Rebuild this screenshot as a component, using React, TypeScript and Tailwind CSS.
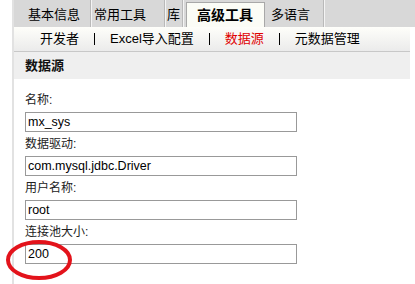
import React from "react";

const cjk = { fontFamily: '"Liberation Sans", "Noto Sans CJK SC", sans-serif' };

function Sep() {
  return (
    <div className="flex h-full">
      <div className="w-px bg-[#b9b9b9]" />
      <div className="w-px bg-[#f4f4f4]" />
    </div>
  );
}

function Field({ label, value }: { label: string; value: string }) {
  return (
    <div className="flex flex-col">
      <div className="h-[24px] flex items-center text-[12px] text-[#222]">{label}</div>
      <div className="h-[20px] w-[272px] border border-[#999] bg-white flex items-center pl-[2px] text-[12.5px] text-black leading-none">
        {value}
      </div>
    </div>
  );
}

export default function App() {
  return (
    <div className="relative w-[415px] h-[284px] bg-white flex overflow-hidden" style={cjk}>
      <div className="w-[12px] shrink-0" />
      <div className="w-[2px] shrink-0 bg-[#e2e2e2]" />
      <div className="flex-1 flex flex-col">
        {/* tab bar */}
        <div className="h-[27px] bg-[#d8d8d8] flex items-end text-[13px] text-black">
          <div className="w-[76px] h-[25px] pl-[14px] flex items-center">基本信息</div>
          <Sep />
          <div className="w-[72px] h-[25px] pl-[2px] flex items-center">常用工具</div>
          <Sep />
          <div className="w-[16px] h-[25px] pl-[1px] flex items-center">库</div>
          <Sep />
          <div className="w-[2px]" />
          <div className="w-[79px] h-[25px] pl-[10px] flex items-center bg-[#fbfcf6] border-t border-l border-r border-[#a8a8a8] font-bold text-[14px]">
            高级工具
          </div>
          <div className="w-[58px] h-[25px] pl-[6px] flex items-center">多语言</div>
          <Sep />
        </div>
        {/* sub nav */}
        <div className="mr-[5px] h-[25px] bg-gradient-to-b from-[#fefefa] to-[#ebebeb] flex items-center pl-[26px] gap-[15px] text-[13px] text-black border-b border-[#c8c8c8]">
          <span>开发者</span>
          <span className="w-px h-[12px] bg-black" />
          <span>Excel导入配置</span>
          <span className="w-px h-[12px] bg-black" />
          <span className="text-[#e00000]">数据源</span>
          <span className="w-px h-[12px] bg-black" />
          <span>元数据管理</span>
        </div>
        {/* header */}
        <div className="mr-[5px] h-[27px] bg-[#efefef] flex items-center pl-[11px] font-bold text-[13px] text-[#111]">
          数据源
        </div>
        {/* form */}
        <div className="pl-[11px] pt-[9px] flex flex-col">
          <Field label="名称:" value="mx_sys" />
          <Field label="数据驱动:" value="com.mysql.jdbc.Driver" />
          <Field label="用户名称:" value="root" />
          <Field label="连接池大小:" value="200" />
        </div>
      </div>
      <svg className="absolute left-[5px] top-[239px]" width="70" height="42" viewBox="0 0 70 42">
        <ellipse cx="34" cy="21" rx="31" ry="18" fill="none" stroke="#e3131b" strokeWidth="4" />
      </svg>
    </div>
  );
}
